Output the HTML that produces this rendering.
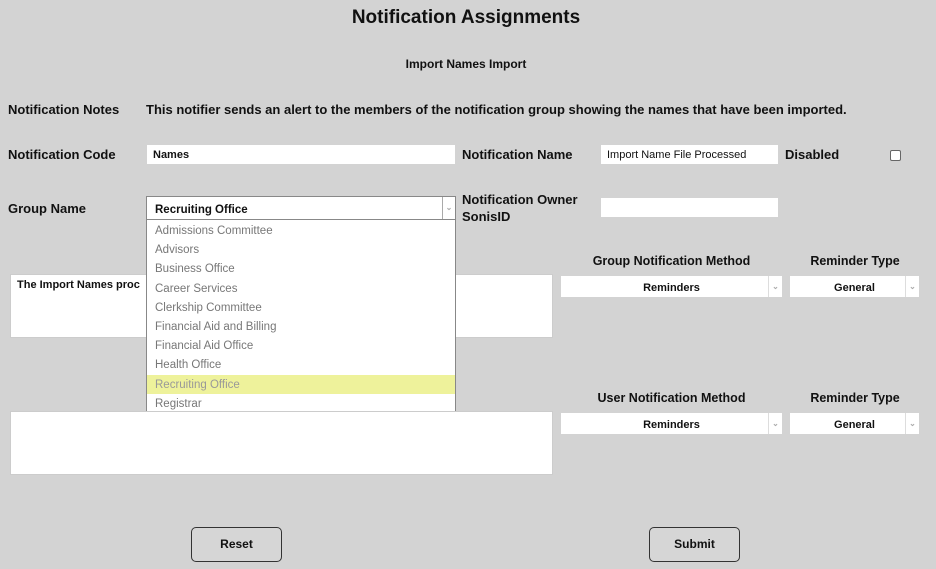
<!DOCTYPE html>
<html><head><style>
body{margin:0;width:936px;height:569px;background:#d3d3d3;font-family:"Liberation Sans",sans-serif;color:#111;position:relative;overflow:hidden}
.a{position:absolute;white-space:nowrap}
.b{font-weight:bold;font-size:13px}
.in{position:absolute;background:#fff;font-size:11px;font-weight:bold;box-sizing:border-box;padding:4px 6px 0}
.sel{position:absolute;background:#fff;font-size:11px;font-weight:bold;text-align:center;box-sizing:border-box;line-height:24px}
.sel .ar{position:absolute;right:0;top:0;width:13px;height:21px;border-left:1px solid #ddd;color:#aaa;font-size:8px;line-height:21px;text-align:center}
.ta{position:absolute;background:#fff;box-sizing:border-box;border:1px solid #ccc}
.btn{position:absolute;border:1px solid #333;border-radius:5px;background:#d6d6d6;font-size:12px;font-weight:bold;text-align:center;line-height:33px;width:89px;height:33px}
.dd div{height:19.2px;line-height:20px;padding-left:8px;font-size:11.5px;color:#777}
</style></head><body>
<div class="a" style="left:0;width:932px;text-align:center;top:7px;font-size:19px;font-weight:bold">Notification Assignments</div>
<div class="a" style="left:0;width:932px;text-align:center;top:57px;font-size:12px;font-weight:bold">Import Names Import</div>
<div class="a b" style="left:8px;top:102px">Notification Notes</div>
<div class="a b" style="left:146px;top:102px;font-size:13px">This notifier sends an alert to the members of the notification group showing the names that have been imported.</div>
<div class="a b" style="left:8px;top:147px">Notification Code</div>
<div class="in" style="left:147px;top:145px;width:308px;height:19px">Names</div>
<div class="a b" style="left:462px;top:147px">Notification Name</div>
<div class="in" style="left:601px;top:145px;width:177px;height:19px;font-weight:normal;color:#111">Import Name File Processed</div>
<div class="a b" style="left:785px;top:147px">Disabled</div>
<div class="a" style="left:890px;top:150px;width:9px;height:9px;border:1px solid #666;border-radius:2px;background:#fff"></div>
<div class="a b" style="left:8px;top:201px">Group Name</div>
<div class="a" style="left:146px;top:196px;width:308px;height:22px;background:#fff;border:1px solid #888;font-size:11.5px;font-weight:bold;line-height:27px;box-sizing:content-box"><span style="padding-left:8px">Recruiting Office</span><span style="position:absolute;right:0;top:0;width:12px;height:22px;border-left:1px solid #aaa;color:#aaa;font-size:8px;text-align:center;line-height:22px">&#8964;</span></div>
<div class="a b" style="left:462px;top:192px">Notification Owner</div>
<div class="a b" style="left:462px;top:209px">SonisID</div>
<div class="in" style="left:601px;top:198px;width:177px;height:19px"></div>
<div class="ta" style="left:10px;top:274px;width:543px;height:64px;font-size:11px;font-weight:bold;padding:4px 6px">The Import Names proc</div>
<div class="a dd" style="left:146px;top:219px;width:308px;height:192px;background:#fff;border:1px solid #888;padding-top:1px">
<div>Admissions Committee</div><div>Advisors</div><div>Business Office</div><div>Career Services</div><div>Clerkship Committee</div><div>Financial Aid and Billing</div><div>Financial Aid Office</div><div>Health Office</div><div style="background:#eef29b;color:#999">Recruiting Office</div><div>Registrar</div></div>
<div class="a b" style="left:561px;width:221px;text-align:center;top:254px;font-size:12.5px">Group Notification Method</div>
<div class="a b" style="left:790px;width:130px;text-align:center;top:254px;font-size:12.5px">Reminder Type</div>
<div class="sel" style="left:561px;top:276px;width:221px;height:21px">Reminders<span class="ar">&#8964;</span></div>
<div class="sel" style="left:790px;top:276px;width:129px;height:21px">General<span class="ar">&#8964;</span></div>
<div class="a b" style="left:561px;width:221px;text-align:center;top:391px;font-size:12.5px">User Notification Method</div>
<div class="a b" style="left:790px;width:130px;text-align:center;top:391px;font-size:12.5px">Reminder Type</div>
<div class="ta" style="left:10px;top:411px;width:543px;height:64px"></div>
<div class="sel" style="left:561px;top:413px;width:221px;height:21px">Reminders<span class="ar">&#8964;</span></div>
<div class="sel" style="left:790px;top:413px;width:129px;height:21px">General<span class="ar">&#8964;</span></div>
<div class="btn" style="left:191px;top:527px">Reset</div>
<div class="btn" style="left:649px;top:527px">Submit</div>
</body></html>
